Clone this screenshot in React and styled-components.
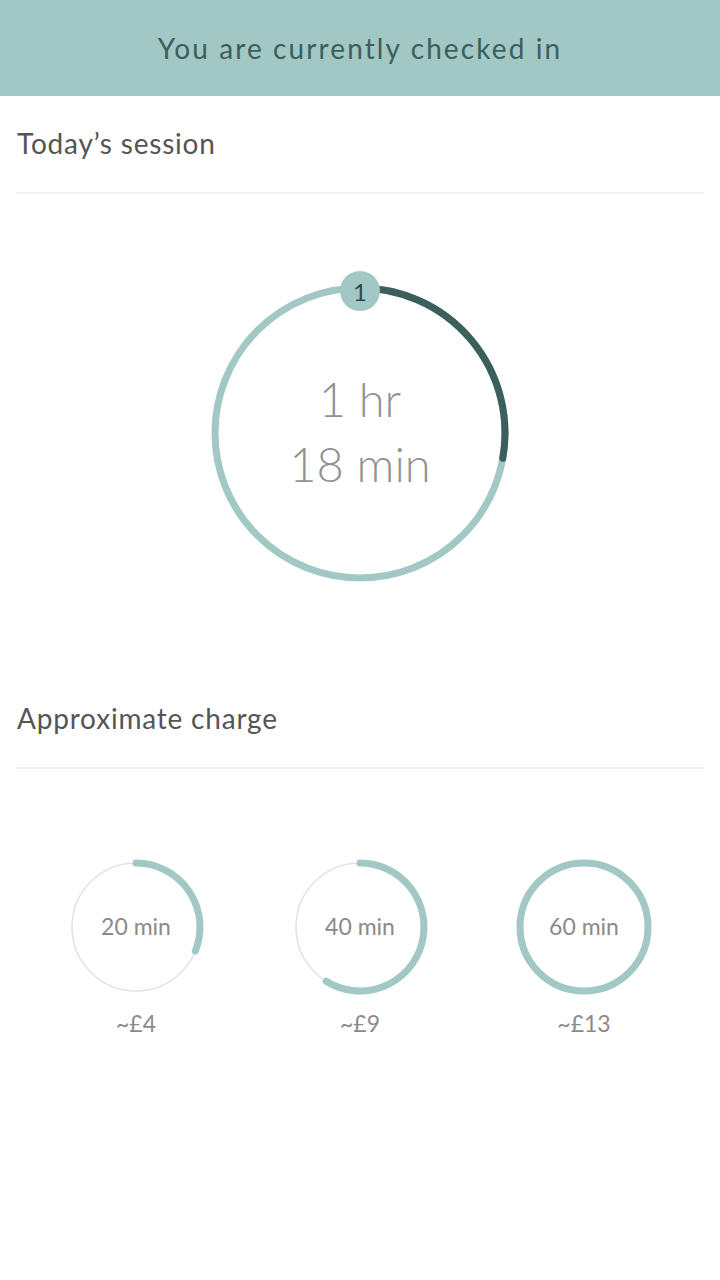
import React from 'react';
import styled, { createGlobalStyle } from 'styled-components';

const GlobalStyle = createGlobalStyle`
  html, body {
    margin: 0;
    padding: 0;
    background: #ffffff;
  }
  body {
    font-family: 'Lato', 'Open Sans', sans-serif;
  }
`;

const TEAL = '#a1c8c4';
const DARK = '#3b5f5b';

const Page = styled.div`
  width: 720px;
  min-height: 1280px;
  background: #ffffff;
`;

const Banner = styled.header`
  height: 96px;
  background: ${TEAL};
  display: flex;
  align-items: center;
  justify-content: center;
  color: #3d5e5b;
  font-size: 28px;
  letter-spacing: 2.1px;
`;

const SectionTitle = styled.div`
  margin: 0 16px;
  height: 98px;
  box-sizing: border-box;
  display: flex;
  align-items: center;
  padding: 0 0 3px 1px;
  border-bottom: 2px solid #f1f1f1;
  color: #555555;
  font-size: 28px;
  letter-spacing: 0.8px;
`;

const RingArea = styled.div`
  display: flex;
  justify-content: center;
  padding: 79px 0 78px;
`;

const RingWrap = styled.div`
  position: relative;
  width: 320px;
  height: 320px;
`;

const RingLabel = styled.div`
  position: absolute;
  inset: 0;
  display: flex;
  flex-direction: column;
  align-items: center;
  justify-content: center;
  color: #929292;
  font-size: 47px;
  line-height: 65px;
  font-weight: 300;
  padding-bottom: 3px;
  box-sizing: border-box;
`;

const Badge = styled.div`
  position: absolute;
  top: -2px;
  left: 50%;
  margin-left: -20px;
  width: 40px;
  height: 40px;
  border-radius: 50%;
  background: ${TEAL};
  color: #2f4a47;
  font-size: 24px;
  display: flex;
  align-items: center;
  justify-content: center;
`;

const Charges = styled.div`
  display: grid;
  grid-template-columns: repeat(3, 1fr);
  padding: 88px 24px 0;
`;

const Charge = styled.div`
  display: flex;
  flex-direction: column;
  align-items: center;
`;

const Dial = styled.div`
  position: relative;
  width: 140px;
  height: 140px;
`;

const DialLabel = styled.div`
  position: absolute;
  inset: 0;
  display: flex;
  align-items: center;
  justify-content: center;
  color: #8a8a8a;
  font-size: 23px;
  padding-bottom: 3px;
  box-sizing: border-box;
`;

const Price = styled.div`
  margin-top: 13px;
  color: #8a8a8a;
  font-size: 23px;
  line-height: 26px;
`;

function arcPath(cx, cy, r, deg) {
  const a = (deg * Math.PI) / 180;
  const x = cx + r * Math.sin(a);
  const y = cy - r * Math.cos(a);
  const large = deg > 180 ? 1 : 0;
  return `M ${cx} ${cy - r} A ${r} ${r} 0 ${large} 1 ${x.toFixed(2)} ${y.toFixed(2)}`;
}

function SessionRing() {
  return (
    <RingWrap>
      <svg width="320" height="320" viewBox="0 0 320 320">
        <circle cx="160" cy="160" r="145" fill="none" stroke={TEAL} strokeWidth="7" />
        <path d={arcPath(160, 160, 145, 100)} fill="none" stroke={DARK} strokeWidth="7" strokeLinecap="round" />
      </svg>
      <Badge>1</Badge>
      <RingLabel>
        <div>1 hr</div>
        <div>18 min</div>
      </RingLabel>
    </RingWrap>
  );
}

function ChargeDial({ label, deg }) {
  return (
    <Dial>
      <svg width="140" height="140" viewBox="0 0 140 140">
        <circle cx="70" cy="70" r="64" fill="none" stroke="#e2e2e2" strokeWidth="1.5" />
        {deg >= 360 ? (
          <circle cx="70" cy="70" r="64" fill="none" stroke={TEAL} strokeWidth="7" />
        ) : (
          <path d={arcPath(70, 70, 64, deg)} fill="none" stroke={TEAL} strokeWidth="7" strokeLinecap="round" />
        )}
      </svg>
      <DialLabel>{label}</DialLabel>
    </Dial>
  );
}

const charges = [
  { label: '20 min', deg: 112, price: '~£4' },
  { label: '40 min', deg: 212, price: '~£9' },
  { label: '60 min', deg: 360, price: '~£13' },
];

function App() {
  return (
    <Page>
      <GlobalStyle />
      <Banner>You are currently checked in</Banner>
      <SectionTitle>Today’s session</SectionTitle>
      <RingArea>
        <SessionRing />
      </RingArea>
      <SectionTitle>Approximate charge</SectionTitle>
      <Charges>
        {charges.map((c) => (
          <Charge key={c.label}>
            <ChargeDial label={c.label} deg={c.deg} />
            <Price>{c.price}</Price>
          </Charge>
        ))}
      </Charges>
    </Page>
  );
}

export default App;
